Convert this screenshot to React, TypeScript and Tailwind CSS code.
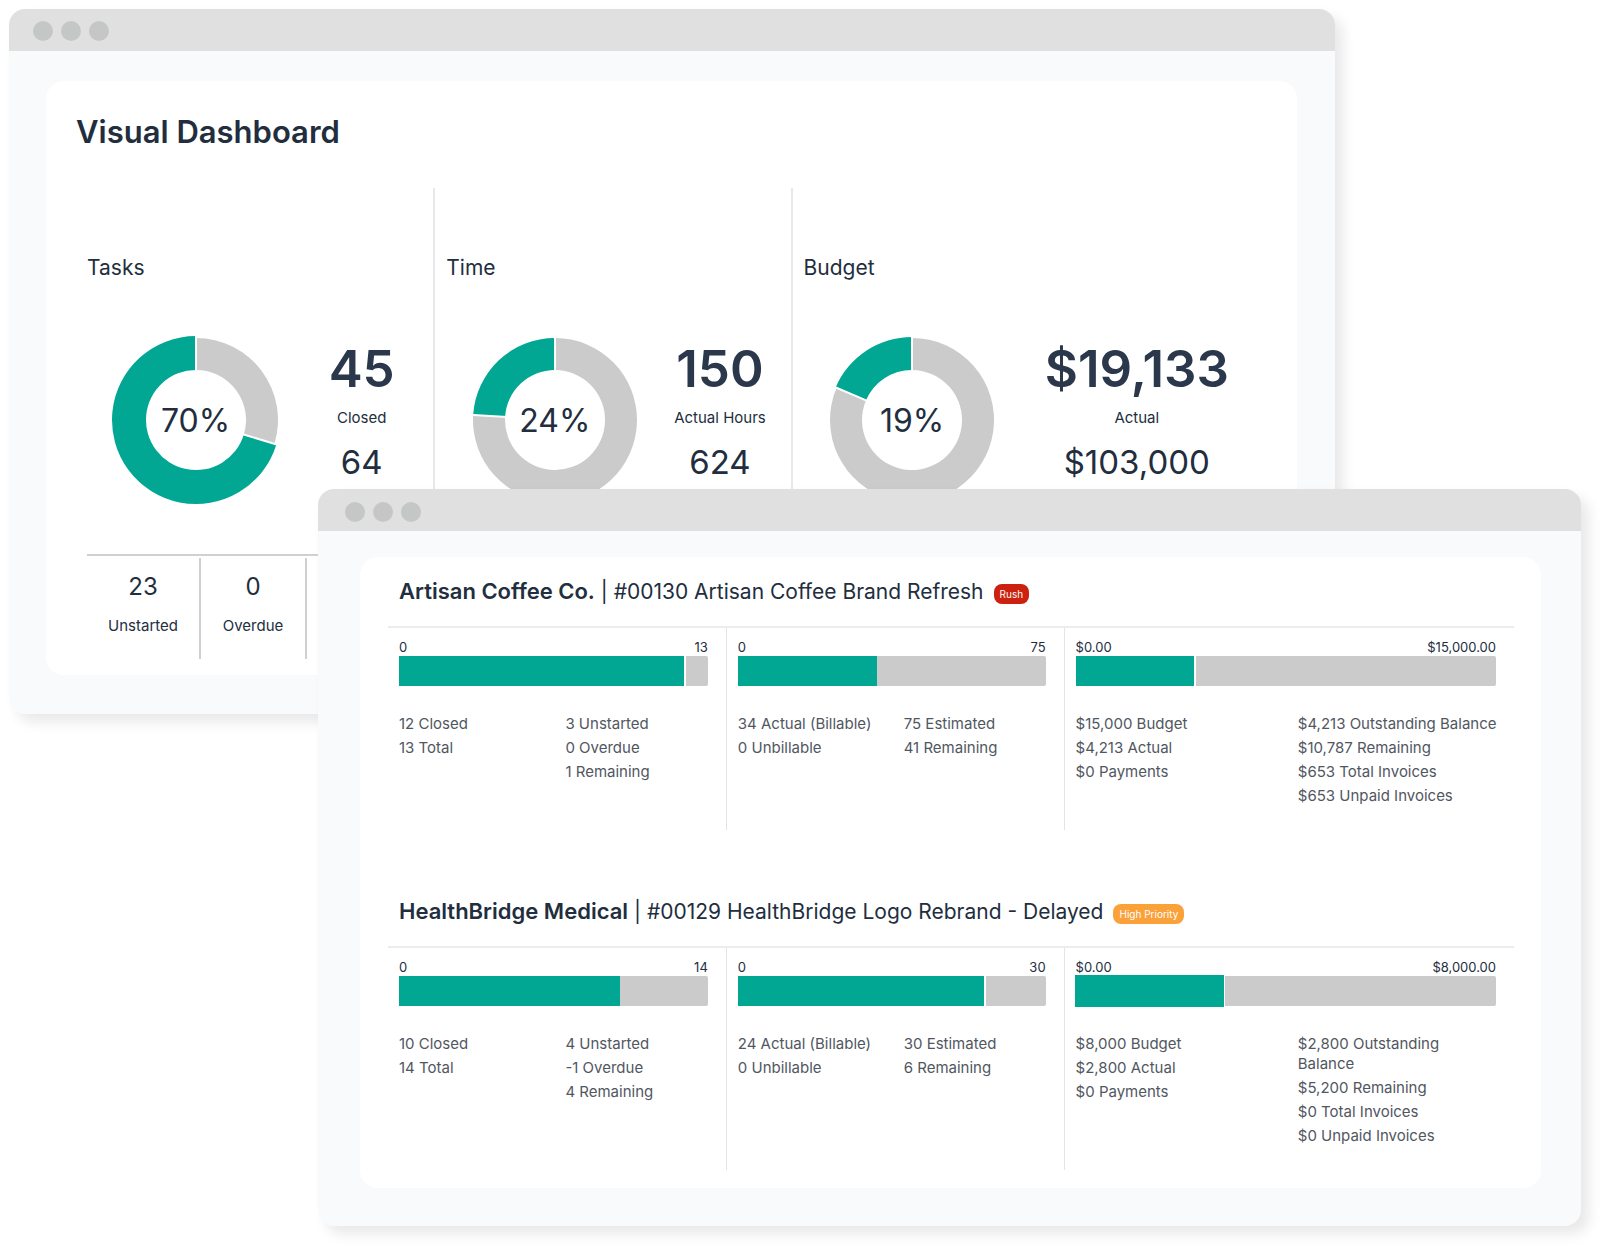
import type { ReactNode } from "react"
import clsx from "clsx"

type Summary = {
  title: string
  part: number
  whole: number
  value: string
  label: string
  total: string
  grow?: number
  counts?: { value: string; label: string; className: string }[]
}

type Meter = {
  from: string
  to: string
  part: number
  whole: number
  split?: boolean
  raised?: boolean
  left: string[]
  right: string[]
}

type Project = {
  client: string
  name: string
  badge: string
  badgeClass: string
  meters: Meter[]
}

const summaries: Summary[] = [
  {
    title: "Tasks",
    part: 45,
    whole: 64,
    value: "45",
    label: "Closed",
    total: "64",
    grow: 2,
    counts: [
      { value: "23", label: "Unstarted", className: "w-[114px]" },
      { value: "0", label: "Overdue", className: "w-[106px]" },
    ],
  },
  { title: "Time", part: 150, whole: 624, value: "150", label: "Actual Hours", total: "624" },
  { title: "Budget", part: 19133, whole: 103000, value: "$19,133", label: "Actual", total: "$103,000", grow: 1 },
]

const projects: Project[] = [
  {
    client: "Artisan Coffee Co.",
    name: "#00130 Artisan Coffee Brand Refresh",
    badge: "Rush",
    badgeClass: "bg-[#cb210e]",
    meters: [
      {
        from: "0",
        to: "13",
        part: 12,
        whole: 13,
        split: true,
        left: ["12 Closed", "13 Total"],
        right: ["3 Unstarted", "0 Overdue", "1 Remaining"],
      },
      {
        from: "0",
        to: "75",
        part: 34,
        whole: 75,
        left: ["34 Actual (Billable)", "0 Unbillable"],
        right: ["75 Estimated", "41 Remaining"],
      },
      {
        from: "$0.00",
        to: "$15,000.00",
        part: 4213,
        whole: 15000,
        split: true,
        left: ["$15,000 Budget", "$4,213 Actual", "$0 Payments"],
        right: ["$4,213 Outstanding Balance", "$10,787 Remaining", "$653 Total Invoices", "$653 Unpaid Invoices"],
      },
    ],
  },
  {
    client: "HealthBridge Medical",
    name: "#00129 HealthBridge Logo Rebrand - Delayed",
    badge: "High Priority",
    badgeClass: "bg-[#faa139]",
    meters: [
      {
        from: "0",
        to: "14",
        part: 10,
        whole: 14,
        left: ["10 Closed", "14 Total"],
        right: ["4 Unstarted", "-1 Overdue", "4 Remaining"],
      },
      {
        from: "0",
        to: "30",
        part: 24,
        whole: 30,
        split: true,
        left: ["24 Actual (Billable)", "0 Unbillable"],
        right: ["30 Estimated", "6 Remaining"],
      },
      {
        from: "$0.00",
        to: "$8,000.00",
        part: 2800,
        whole: 8000,
        split: true,
        raised: true,
        left: ["$8,000 Budget", "$2,800 Actual", "$0 Payments"],
        right: ["$2,800 Outstanding\nBalance", "$5,200 Remaining", "$0 Total Invoices", "$0 Unpaid Invoices"],
      },
    ],
  },
]

function BrowserWindow({ className, barClass, children }: { className: string; barClass: string; children: ReactNode }) {
  return (
    <section className={clsx("rounded-2xl bg-[#f9fafc] shadow-[8px_8px_13px_rgba(0,0,0,0.09)]", className)}>
      <div className={clsx("flex h-[42px] items-center rounded-t-2xl bg-[#e0e0e0]", barClass)}>
        <span className="size-5 rounded-full bg-[#c5c7c6]" />
        <span className="size-5 rounded-full bg-[#c5c7c6]" />
        <span className="size-5 rounded-full bg-[#c5c7c6]" />
      </div>
      {children}
    </section>
  )
}

function point(radius: number, turn: number) {
  const angle = turn * Math.PI * 2
  return `${84 + radius * Math.sin(angle)} ${84 - radius * Math.cos(angle)}`
}

function slice(start: number, end: number, outer: number, inner: number) {
  const large = end - start > 0.5 ? 1 : 0
  return `M${point(outer, start)} A${outer} ${outer} 0 ${large} 1 ${point(outer, end)} L${point(inner, end)} A${inner} ${inner} 0 ${large} 0 ${point(inner, start)} Z`
}

function Donut({ part, whole, grow = 0 }: { part: number; whole: number; grow?: number }) {
  const rest = 1 - part / whole
  return (
    <div className="grid size-[168px] place-items-center">
      <svg viewBox="0 0 168 168" className="col-start-1 row-start-1 size-full overflow-visible" aria-hidden="true">
        <path d={slice(0, rest, 82, 50)} fill="#cbcbcb" />
        <path d={slice(rest, 1, 82 + grow, 50)} fill="#02a793" />
        <path d={`M${point(48, 0)} L${point(86, 0)} M${point(48, rest)} L${point(86, rest)}`} stroke="#fff" strokeWidth="2" />
      </svg>
      <span className="col-start-1 row-start-1 pt-0.5 text-[32px] leading-10">{Math.round((part / whole) * 100)}%</span>
    </div>
  )
}

function SummaryColumn({ item, className }: { item: Summary; className: string }) {
  return (
    <div className={clsx("pt-[66px] pr-3.5", className)}>
      <h2 className="text-[21px] leading-7">{item.title}</h2>
      <div className="mt-[54px] flex">
        <div className="flex w-[217px] shrink-0 justify-center">
          <Donut part={item.part} whole={item.whole} grow={item.grow} />
        </div>
        <div className="flex-1 pt-[5px] text-center">
          <p className="text-[51px] leading-[56px] font-semibold text-[#2b374a]">{item.value}</p>
          <p className="mt-[9px] text-[15px] leading-6 whitespace-nowrap">{item.label}</p>
          <p className="mt-3 text-[33px] leading-10">{item.total}</p>
        </div>
      </div>
      {item.counts && (
        <div className="mt-[50px] flex border-t-2 border-[#d0d0d0] pt-0.5">
          {item.counts.map((count) => (
            <div key={count.label} className={clsx("border-r-2 border-[#d0d0d0] pt-[13px] pb-[21px] text-center", count.className)}>
              <p className="text-2xl">{count.value}</p>
              <p className="mt-[11px] text-[15px] leading-6">{count.label}</p>
            </div>
          ))}
        </div>
      )}
    </div>
  )
}

function StatList({ items }: { items: string[] }) {
  return (
    <ul className="flex flex-col gap-1 text-[15px] leading-5 whitespace-pre text-[#51575f]">
      {items.map((item) => (
        <li key={item}>{item}</li>
      ))}
    </ul>
  )
}

function MeterColumn({ meter, className }: { meter: Meter; className: string }) {
  return (
    <div className={clsx("pt-[11px] pb-6", className)}>
      <div className="pr-[18px] pl-[11px]">
        <div className="flex justify-between text-[13px] leading-[17px]">
          <span>{meter.from}</span>
          <span>{meter.to}</span>
        </div>
        <div className={clsx("flex h-[30px]", meter.split && "gap-0.5")}>
          <div
            className={clsx("bg-[#02a793]", meter.raised && "ring-1 ring-[#02a793]")}
            style={{ width: `${(meter.part / meter.whole) * 100}%` }}
          />
          <div className="flex-1 rounded-r-xs bg-[#cbcbcb]" />
        </div>
      </div>
      <div className="mt-7 grid grid-cols-2 gap-x-1.5 pl-[11px]">
        <StatList items={meter.left} />
        <StatList items={meter.right} />
      </div>
    </div>
  )
}

function ProjectSection({ project }: { project: Project }) {
  return (
    <article>
      <div className="flex items-center pl-[11px]">
        <h2 className="text-[21px] leading-8 whitespace-nowrap">
          <strong className="text-[22px] font-semibold">{project.client}</strong> | {project.name}
        </h2>
        <span className={clsx("mt-1 ml-2.5 rounded-lg px-1.5 text-[10px] leading-5 text-white", project.badgeClass)}>
          {project.badge}
        </span>
      </div>
      <div className="mt-[18px] grid grid-cols-[3fr_3fr_4fr] border-t-2 border-[#ececec]">
        {project.meters.map((meter, index) => (
          <MeterColumn key={index} meter={meter} className={index > 0 ? "border-l border-[#e4e4e4]" : ""} />
        ))}
      </div>
    </article>
  )
}

export default function App() {
  return (
    <main className="min-h-screen bg-white pt-[9px] pr-[27px] pb-[26px] pl-[9px] font-['Inter',sans-serif] text-[#222e3e]">
      <BrowserWindow className="mr-[246px]" barClass="gap-2 pt-0.5 pl-6">
        <div className="pt-[30px] pr-[38px] pb-[39px] pl-[37px]">
          <div className="rounded-[18px] bg-white px-[30px] pt-[31px] pb-4">
            <h1 className="text-[31px] leading-10 font-semibold">Visual Dashboard</h1>
            <div className="mt-9 grid grid-cols-[3fr_3fr_4fr]">
              {summaries.map((item, index) => (
                <SummaryColumn
                  key={item.title}
                  item={item}
                  className={index > 0 ? "border-l-2 border-[#e8e8e8] pl-[11px]" : "pl-[11px]"}
                />
              ))}
            </div>
          </div>
        </div>
      </BrowserWindow>

      <BrowserWindow className="relative -mt-[225px] ml-[309px]" barClass="gap-2 pt-1 pl-[27px]">
        <div className="pt-[26px] pr-10 pb-[38px] pl-[42px]">
          <div className="flex flex-col gap-[65px] rounded-[18px] bg-white pt-[18px] pr-[27px] pb-[18px] pl-7">
            {projects.map((project) => (
              <ProjectSection key={project.client} project={project} />
            ))}
          </div>
        </div>
      </BrowserWindow>
    </main>
  )
}
